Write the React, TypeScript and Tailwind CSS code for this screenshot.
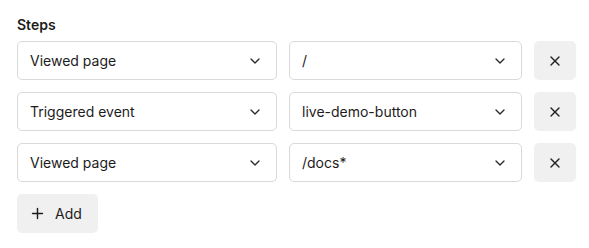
import { ChevronDown, Plus, X } from "lucide-react";

type Step = { kind: string; value: string };

const steps: Step[] = [
    { kind: "Viewed page", value: "/" },
    { kind: "Triggered event", value: "live-demo-button" },
    { kind: "Viewed page", value: "/docs*" },
];

const Select = ({ label, width }: { label: string; width: string }) => (
    <button
        type="button"
        className={`flex h-[39px] ${width} items-center justify-between rounded-[5px] border border-[#d9d9d9] bg-white pl-3 pr-[13px] text-left text-[14px] text-[#1c1c1c]`}
    >
        <span>{label}</span>
        <ChevronDown className="h-4 w-4 text-[#2a2a2a]" strokeWidth={2} />
    </button>
);

export default function App() {
    return (
        <div className="min-h-[248px] bg-white pl-[17px] pt-[15px] font-[Inter,sans-serif] text-[#1c1c1c]">
            <h3 className="mb-[6px] text-[14px] font-semibold leading-5">Steps</h3>
            <div className="flex flex-col gap-3">
                {steps.map((step, i) => (
                    <div key={i} className="flex gap-3">
                        <Select label={step.kind} width="w-[260px]" />
                        <Select label={step.value} width="w-[233px]" />
                        <button
                            type="button"
                            className="flex h-[39px] w-[42px] items-center justify-center rounded-[5px] bg-[#f0f0f0] text-[#222]"
                        >
                            <X className="h-4 w-4" strokeWidth={2} />
                        </button>
                    </div>
                ))}
                <button
                    type="button"
                    className="flex h-[39px] w-[81px] items-center gap-[9px] rounded-[5px] bg-[#f0f0f0] pl-[12px] text-[14px] text-[#1c1c1c]"
                >
                    <Plus className="h-[17px] w-[17px]" strokeWidth={2} />
                    Add
                </button>
            </div>
        </div>
    );
}
